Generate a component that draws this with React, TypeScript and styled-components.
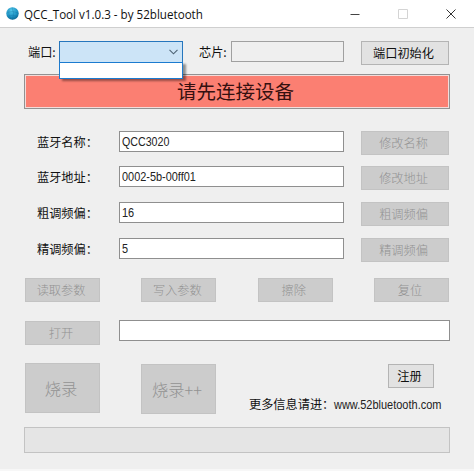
import React from "react";
import styled, { createGlobalStyle } from "styled-components";

const Global = createGlobalStyle`
  * { box-sizing: border-box; }
  body { margin: 0; background: #efefef; overflow: hidden; }
`;

const Window = styled.div`
  width: 474px;
  height: 471px;
  background: #efefef;
  border-bottom: 2px solid #f7f7f7;
  font-family: "Noto Sans CJK SC", sans-serif;
  font-size: 12.2px;
  line-height: 16px;
  color: #111;
  white-space: nowrap;
  overflow: hidden;
`;

const TitleBar = styled.header`
  display: flex;
  align-items: center;
  height: 28px;
  padding: 0 18px 0 6px;
  background: #fff;
  border-bottom: 1px solid #cfcfcf;
`;

const Title = styled.h1<{ $scale: number }>`
  flex: 1;
  margin: 1px 0 0 5px;
  font: 400 13px/18px "Open Sans", sans-serif;
  transform: scaleX(${(p) => p.$scale});
  transform-origin: left;
`;

const Controls = styled.div`
  display: flex;
  gap: 38px;
`;

const Content = styled.main`
  display: flex;
  flex-direction: column;
  padding: 13px 24px 0;
`;

const PortRow = styled.div`
  display: flex;
  height: 24px;
  padding-left: 4px;
`;

const PortLabel = styled.span<{ $width: number }>`
  width: ${(p) => p.$width}px;
  padding-top: 3px;
`;

const Combo = styled.div`
  position: relative;
  display: flex;
  align-items: center;
  justify-content: flex-end;
  width: 124px;
  height: 22px;
  margin-right: 16px;
  padding-right: 4px;
  background: #cce4f7;
  border: 1px solid #2676bd;
`;

const DropList = styled.div`
  position: absolute;
  z-index: 1;
  top: 20px;
  left: -1px;
  width: 124px;
  height: 17px;
  background: #fff;
  border: 1px solid #1b7bd0;
  box-shadow: 3px 2px 2px rgba(0, 0, 0, 0.4);
`;

const Field = styled.div<{ $width: number; $readonly?: boolean }>`
  width: ${(p) => p.$width}px;
  height: 21px;
  padding: 1px 0 0 2px;
  background: ${(p) => (p.$readonly ? "#efefef" : "#fff")};
  border: 1px solid ${(p) => (p.$readonly ? "#a0a0a0" : "#8f8f8f")};
`;

const Latin = styled.span<{ $scale: number; $size?: number }>`
  display: inline-block;
  font: 400 ${(p) => p.$size ?? 13}px/18px "Liberation Sans", sans-serif;
  color: #222;
  transform: scaleX(${(p) => p.$scale});
  transform-origin: left;
`;

const Button = styled.button<{
  $width: number;
  $height?: number;
  $size?: number;
  $mt?: number;
}>`
  display: flex;
  align-items: center;
  justify-content: center;
  flex: none;
  width: ${(p) => p.$width}px;
  height: ${(p) => p.$height ?? 24}px;
  margin: ${(p) => p.$mt ?? 0}px 0 0;
  padding: 0 3px 0 0;
  font: 400 ${(p) => p.$size ?? 12.2}px/16px "Noto Sans CJK SC", sans-serif;
  color: #111;
  background: #e2e2e2;
  border: 1px solid #b4b4b4;

  &:disabled {
    color: #929292;
    font-weight: 300;
    background: #cccccc;
    border-color: #c3c3c3;
  }
`;

const Banner = styled.div`
  display: flex;
  align-items: center;
  justify-content: center;
  height: 35px;
  margin-top: 9px;
  padding: 0 3px 2px 0;
  font-size: 19.5px;
  line-height: 28px;
  color: #351010;
  background: #fb7f72;
  border: 1px solid #929292;
  box-shadow: inset 0 0 0 1px #f3dcda;
`;

const ParamGrid = styled.div`
  display: grid;
  grid-template-columns: 95px 242px 88px;
  grid-template-rows: 35px 36px 36px 35px;
  margin-top: 22px;
`;

const ParamLabel = styled.span`
  padding: 3px 0 0 13px;
`;

const ActionRow = styled.div`
  display: flex;
  justify-content: space-between;
  margin-top: 5px;
  padding: 0 1px;
`;

const FileRow = styled.div`
  display: flex;
  justify-content: space-between;
  height: 25px;
  margin-top: 18px;
  padding-left: 1px;
`;

const BurnRow = styled.div`
  display: flex;
  height: 51px;
  margin-top: 18px;
  padding-left: 1px;
`;

const Gap = styled.div<{ $width: number }>`
  flex: none;
  width: ${(p) => p.$width}px;
`;

const Info = styled.div`
  display: flex;
  flex-direction: column;
  align-items: flex-end;
  width: 201px;
  margin-left: 33px;
`;

const RegisterSlot = styled.div`
  display: flex;
  padding-right: 16px;
`;

const Site = styled.div`
  display: flex;
  width: 201px;
  margin-top: 8px;
`;

const Progress = styled.div`
  height: 26px;
  margin-top: 13px;
  background: #e5e5e5;
  border: 1px solid #c3c3c3;
`;

const params = [
  { label: "蓝牙名称：", value: "QCC3020", action: "修改名称", scale: 0.82 },
  { label: "蓝牙地址：", value: "0002-5b-00ff01", action: "修改地址", scale: 0.84 },
  { label: "粗调频偏：", value: "16", action: "粗调频偏", scale: 0.84 },
  { label: "精调频偏：", value: "5", action: "精调频偏", scale: 0.84 },
];

const Globe = () => (
  <svg width="13" height="13" viewBox="0 0 13 13">
    <defs>
      <radialGradient id="globe" cx="40%" cy="25%" r="80%">
        <stop offset="0" stopColor="#52c6e8" />
        <stop offset="0.6" stopColor="#2096c6" />
        <stop offset="1" stopColor="#0a6390" />
      </radialGradient>
    </defs>
    <circle cx="6.5" cy="6.5" r="6.2" fill="url(#globe)" />
    <path
      d="M.8 5.5Q6.5 3 12.2 6M1.5 9.3Q7 7 11.6 9.5M6 .5Q9 6 6.5 12.5M3 1.5Q2 7 4.5 12"
      fill="none"
      stroke="#0a608e"
      strokeWidth=".5"
      opacity=".45"
    />
  </svg>
);

export default function App() {
  return (
    <Window>
      <Global />
      <TitleBar>
        <Globe />
        <Title $scale={0.893}>QCC_Tool v1.0.3 - by 52bluetooth</Title>
        <Controls>
          <svg width="10" height="10" viewBox="0 0 10 10">
            <path d="M.5 5.5h9" stroke="#444" />
          </svg>
          <svg width="10" height="10" viewBox="0 0 10 10">
            <path d="M.5.5h9v9h-9z" fill="none" stroke="#d4d4d4" />
          </svg>
          <svg width="10" height="10" viewBox="0 0 10 10">
            <path d="M.5.5l9 9M9.5.5l-9 9" stroke="#333" />
          </svg>
        </Controls>
      </TitleBar>
      <Content>
        <PortRow>
          <PortLabel $width={31}>端口:</PortLabel>
          <Combo>
            <svg width="9" height="6" viewBox="0 0 9 6">
              <path d="M.5.8l4 4 4-4" fill="none" stroke="#4d6475" strokeWidth="1.1" />
            </svg>
            <DropList />
          </Combo>
          <PortLabel $width={32}>芯片:</PortLabel>
          <Field $width={113} $readonly />
          <Gap $width={17} />
          <Button $width={88}>端口初始化</Button>
        </PortRow>
        <Banner>请先连接设备</Banner>
        <ParamGrid>
          {params.map((p) => (
            <React.Fragment key={p.label}>
              <ParamLabel>{p.label}</ParamLabel>
              <Field $width={225}>
                <Latin $scale={p.scale}>{p.value}</Latin>
              </Field>
              <Button $width={88} disabled>
                {p.action}
              </Button>
            </React.Fragment>
          ))}
        </ParamGrid>
        <ActionRow>
          {["读取参数", "写入参数", "擦除", "复位"].map((t) => (
            <Button key={t} $width={75} disabled>
              {t}
            </Button>
          ))}
        </ActionRow>
        <FileRow>
          <Button $width={75} $mt={1} disabled>
            打开
          </Button>
          <Field $width={331} />
        </FileRow>
        <BurnRow>
          <Button $width={75} $height={50} $size={16.3} disabled>
            烧录
          </Button>
          <Gap $width={41} />
          <Button $width={75} $height={50} $size={16.3} $mt={1} disabled>
            烧录++
          </Button>
          <Info>
            <RegisterSlot>
              <Button $width={46} $mt={1}>
                注册
              </Button>
            </RegisterSlot>
            <Site>
              更多信息请进：
              <Latin $scale={0.915} $size={12}>
                www.52bluetooth.com
              </Latin>
            </Site>
          </Info>
        </BurnRow>
        <Progress />
      </Content>
    </Window>
  );
}
